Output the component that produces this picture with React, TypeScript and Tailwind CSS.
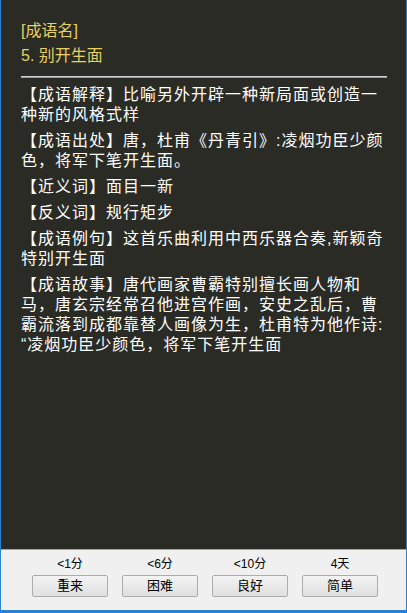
const entries = [
  "【成语解释】比喻另外开辟一种新局面或创造一种新的风格式样",
  "【成语出处】唐，杜甫《丹青引》:凌烟功臣少颜色，将军下笔开生面。",
  "【近义词】面目一新",
  "【反义词】规行矩步",
  "【成语例句】这首乐曲利用中西乐器合奏,新颖奇特别开生面",
  // zero-width space so the quote can start the next line like the original
  "【成语故事】唐代画家曹霸特别擅长画人物和马，唐玄宗经常召他进宫作画，安史之乱后，曹霸流落到成都靠替人画像为生，杜甫特为他作诗:\u200B“凌烟功臣少颜色，将军下笔开生面",
];

const answers = [
  { time: "<1分", name: "重来" },
  { time: "<6分", name: "困难" },
  { time: "<10分", name: "良好" },
  { time: "4天", name: "简单" },
];

export default function App() {
  return (
    <div className="flex h-[613px] w-[407px] flex-col border-x border-b-[3px] border-[#2a80d2] font-['Liberation_Sans','Noto_Sans_CJK_SC',sans-serif]">
      <div className="flex-1 bg-[#2a2b25] pl-[20px] pr-[16px] pt-[18px]">
        <div className="text-[16px] leading-[25px] text-[#e8d064]">
          <p>[成语名]</p>
          <p>5. 别开生面</p>
        </div>
        <div className="mt-[8px] mr-[3px] h-[2px] border-t border-[#d0d0d0] bg-[#9a9a9a]" />
        <div className="mt-[7px] flex flex-col gap-[6px] text-[16px] leading-[20px] tracking-[1px] text-white">
          {entries.map((line) => (
            <p key={line}>{line}</p>
          ))}
        </div>
      </div>
      <div className="h-[61px] border-t border-[#a3a3a3] bg-[#f0f0f0] pl-[31px] pt-[4px]">
        <div className="flex gap-[14px]">
          {answers.map((a) => (
            <div key={a.name} className="flex w-[76px] flex-col items-center">
              <span className="h-[20px] text-[12px] leading-[20px] text-black">
                {a.time}
              </span>
              <button
                type="button"
                className="mt-[1px] h-[22px] w-[76px] rounded-[2px] border border-[#acacac] bg-linear-to-b from-[#f3f3f3] to-[#e0e0e0] text-[13px] leading-[20px] text-black"
              >
                {a.name}
              </button>
            </div>
          ))}
        </div>
      </div>
    </div>
  );
}
